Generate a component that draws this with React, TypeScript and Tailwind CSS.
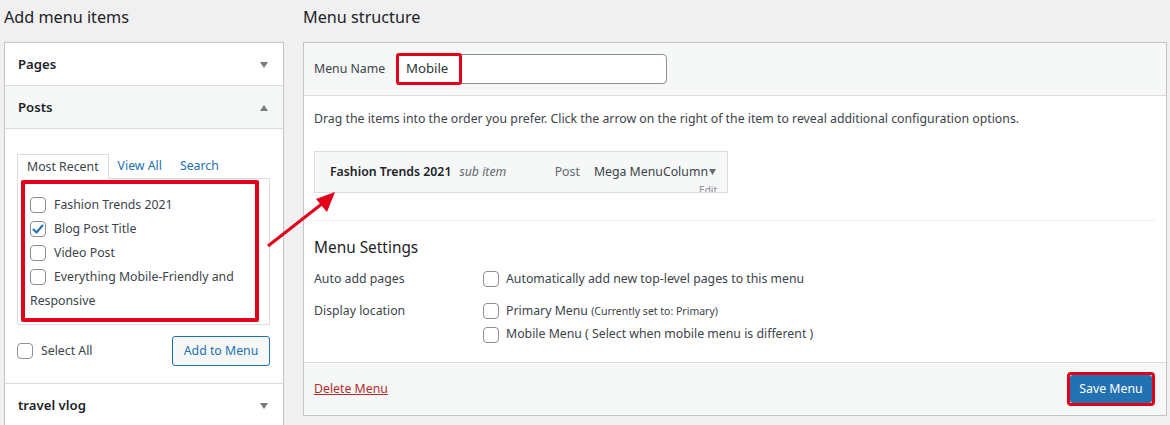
import React from "react";

const Box = ({ checked }: { checked?: boolean }) => (
  <span className="inline-flex w-4 h-4 shrink-0 items-center justify-center rounded-[4px] border border-[#8c8f94] bg-white align-middle">
    {checked && (
      <svg width="14" height="14" viewBox="0 0 14 14">
        <polyline points="2.5,7.5 5.5,10.5 11.5,3.5" fill="none" stroke="#2271b1" strokeWidth="2" strokeLinecap="round" strokeLinejoin="round" />
      </svg>
    )}
  </span>
);

const Down = () => (
  <svg width="8" height="6" viewBox="0 0 8 6"><polygon points="0,0 8,0 4,6" fill="#787c82" /></svg>
);
const Up = () => (
  <svg width="8" height="6" viewBox="0 0 8 6"><polygon points="0,6 8,6 4,0" fill="#787c82" /></svg>
);

const SectionHead = ({ title, open, bg }: { title: string; open?: boolean; bg?: boolean }) => (
  <div className={`h-[43px] shrink-0 flex items-center justify-between pl-[13px] pr-[15px] pt-[1px] border-b border-[#dcdcde] ${bg ? "bg-[#f6f7f7]" : "bg-white"}`}>
    <span className="text-[13.2px] font-semibold text-[#1d2327]">{title}</span>
    {open ? <Up /> : <Down />}
  </div>
);

const items = ["Fashion Trends 2021", "Blog Post Title", "Video Post", "Everything Mobile-Friendly and Responsive"];

export default function App() {
  return (
    <div className="relative w-[1170px] h-[425px] overflow-hidden bg-[#f0f0f1] font-['Noto_Sans',sans-serif] text-[12.3px] text-[#3c434a] flex items-start">
      {/* Left column */}
      <div className="w-[284px] pl-[4px] shrink-0 flex flex-col">
        <div className="h-[42px] shrink-0 pt-[5px] leading-[24px] text-[16.2px] text-[#1d2327]">Add menu items</div>
        <div className="border border-[#c3c4c7] bg-white shrink-0">
          <SectionHead title="Pages" />
          <SectionHead title="Posts" open bg />
          <div className="pt-[25px] pl-[12px] pr-[13px] pb-[17px] border-b border-[#dcdcde]">
            <div className="flex h-[24px] items-stretch">
              <div className="px-[9px] border-t border-l border-r border-[#dcdcde] bg-white flex items-center relative z-10 h-[25px]">Most Recent</div>
              <div className="px-[9px] flex items-center text-[#2271b1]">View All</div>
              <div className="px-[9px] flex items-center text-[#2271b1]">Search</div>
            </div>
            <div className="relative border border-[#dcdcde] bg-white">
              <ul className="pt-[14px] pb-[11px] pl-[12px] pr-[10px]">
                {items.map((t, i) => (
                  <li key={t} className="leading-[24px]">
                    <label>
                      <span className="inline-flex mr-[8px] -mt-[2px] align-middle">
                        <Box checked={i === 1} />
                      </span>
                      {t}
                    </label>
                  </li>
                ))}
              </ul>
              <div className="absolute left-[3px] top-[1px] w-[238px] h-[142px] border-4 border-[#e2001a] rounded-[2px] pointer-events-none" />
            </div>
            <div className="mt-[11px] h-[30px] flex items-center justify-between">
              <div className="flex items-center">
                <Box />
                <span className="ml-[8px]">Select All</span>
              </div>
              <button className="w-[98px] h-[30px] border border-[#2271b1] rounded-[3px] bg-[#f6f7f7] text-[#2271b1] text-[12.3px]">Add to Menu</button>
            </div>
          </div>
          <SectionHead title="travel vlog" />
        </div>
      </div>

      {/* Right column */}
      <div className="ml-[19px] w-[864px] shrink-0 flex flex-col">
        <div className="h-[42px] shrink-0 pt-[5px] leading-[24px] text-[16.2px] text-[#1d2327]">Menu structure</div>
        <div className="border border-[#c3c4c7] bg-white shrink-0">
          <div className="h-[53px] bg-[#f6f7f7] border-b border-[#dcdcde] px-[10px] flex items-center">
            <span className="w-[82px] shrink-0">Menu Name</span>
            <div className="relative">
              <div className="w-[271px] h-[30px] border border-[#8c8f94] rounded-[4px] bg-white px-[9px] flex items-center text-[13.2px] text-[#2c3338]">Mobile</div>
              <div className="absolute left-0 -top-[1px] w-[66px] h-[32px] border-[3px] border-[#e2001a] rounded-[3px]" />
            </div>
          </div>
          <div className="pl-[10px] pr-[11px]">
            <p className="pt-[13px] leading-[20px]">Drag the items into the order you prefer. Click the arrow on the right of the item to reveal additional configuration options.</p>
            <div className="relative mt-[22px] w-[414px] h-[42px] bg-[#f6f7f7] border border-[#dcdcde] flex items-center pl-[15px] pr-[11px] overflow-hidden">
              <span className="font-semibold text-[#1d2327]">Fashion Trends 2021</span>
              <span className="ml-[8px] italic text-[#646970]">sub item</span>
              <span className="ml-auto text-[#646970]">Post</span>
              <span className="ml-[14px] flex items-center">Mega MenuColumn<svg width="7" height="6" viewBox="0 0 7 6" className="ml-[1px]"><polygon points="0,0 7,0 3.5,6" fill="#646970" /></svg></span>
              <span className="absolute right-[10px] top-[33px] text-[10px] text-[#8c8f94] leading-none">Edit</span>
            </div>
            <div className="mt-[27px] border-t border-[#f0f0f1]" />
            <div className="pt-[15px] leading-[24px] text-[15.4px] text-[#1d2327]">Menu Settings</div>
            <div className="mt-[7px] flex h-[24px] items-center">
              <span className="w-[169px] shrink-0">Auto add pages</span>
              <Box />
              <span className="ml-[7px]">Automatically add new top-level pages to this menu</span>
            </div>
            <div className="mt-[8px] flex">
              <span className="w-[169px] shrink-0 leading-[24px]">Display location</span>
              <div className="flex flex-col">
                <div className="flex h-[24px] items-center">
                  <Box />
                  <span className="ml-[7px]">Primary Menu <span className="text-[10.5px]">(Currently set to: Primary)</span></span>
                </div>
                <div className="flex h-[23px] items-center">
                  <Box />
                  <span className="ml-[7px]">Mobile Menu ( Select when mobile menu is different )</span>
                </div>
              </div>
            </div>
            <div className="h-[16px]" />
          </div>
          <div className="h-[53px] bg-[#f6f7f7] border-t border-[#dcdcde] pl-[10px] pr-[11px] flex items-center justify-between">
            <a className="text-[#b32d2e] underline">Delete Menu</a>
            <div className="border-[3px] border-[#e2001a] rounded-[4px]">
              <button className="w-[82px] h-[28px] bg-[#2271b1] text-white rounded-[3px] text-[12.3px]">Save Menu</button>
            </div>
          </div>
        </div>
      </div>

      {/* Annotation arrow */}
      <svg className="absolute left-0 top-0 pointer-events-none" width="1170" height="425">
        <line x1="268" y1="246" x2="323" y2="203" stroke="#e2001a" strokeWidth="3" />
        <polygon points="335,192 316,199 327,212" fill="#e2001a" />
      </svg>
    </div>
  );
}
